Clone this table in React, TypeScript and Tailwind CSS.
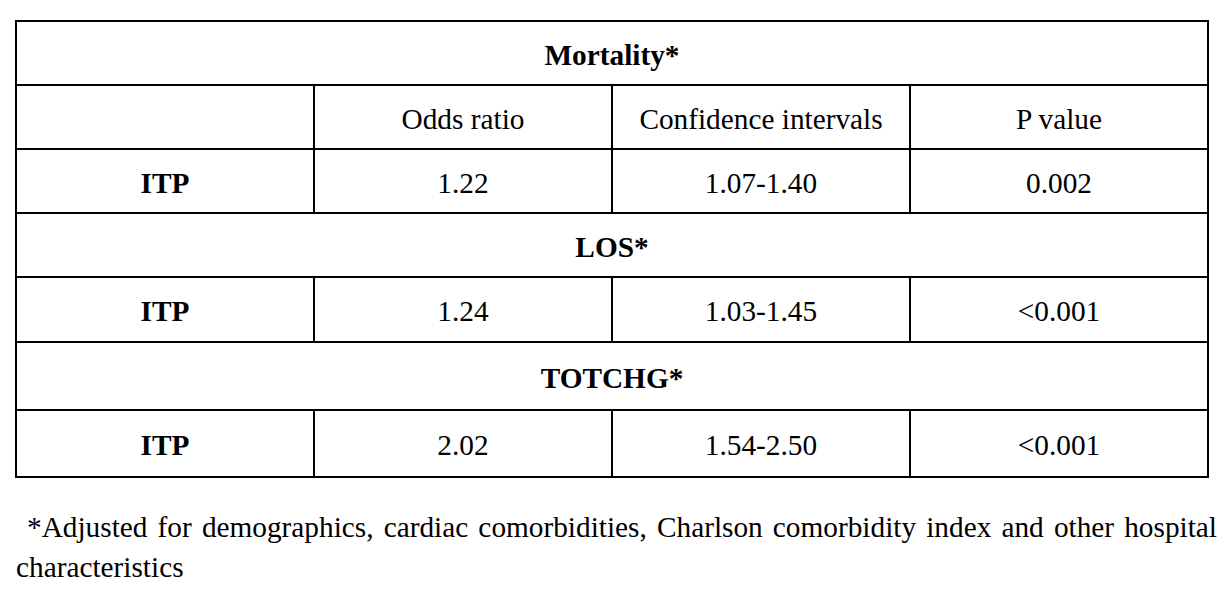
type Row = { label: string; odds: string; ci: string; p: string; h: string };

function Cell({ children, bold, last, h }: { children?: React.ReactNode; bold?: boolean; last?: boolean; h: string }) {
  return (
    <div
      className={`flex items-center justify-center pt-[5px] ${h} ${last ? "" : "border-r-2 border-black"} ${bold ? "font-bold" : ""}`}
    >
      {children}
    </div>
  );
}

function DataRow({ row, border }: { row: Row; border: boolean }) {
  return (
    <div className={`grid grid-cols-[298px_298px_298px_1fr] ${border ? "border-b-2 border-black" : ""}`}>
      <Cell h={row.h} bold>{row.label}</Cell>
      <Cell h={row.h}>{row.odds}</Cell>
      <Cell h={row.h}>{row.ci}</Cell>
      <Cell h={row.h} last>{row.p}</Cell>
    </div>
  );
}

function Section({ title, h }: { title: string; h: string }) {
  return (
    <div className={`flex items-center justify-center pt-[5px] border-b-2 border-black font-bold ${h}`}>{title}</div>
  );
}

export default function App() {
  return (
    <div className="min-h-screen bg-white text-black font-['Liberation_Serif','Times_New_Roman',serif]">
      <div className="pt-[20px] pl-[15px]">
        <div className="w-[1194px] border-2 border-black text-[29.3px]">
          <Section title="Mortality*" h="h-[64px]" />
          <div className="grid grid-cols-[298px_298px_298px_1fr] border-b-2 border-black">
            <Cell h="h-[62px]" />
            <Cell h="h-[62px]">Odds ratio</Cell>
            <Cell h="h-[62px]">Confidence intervals</Cell>
            <Cell h="h-[62px]" last>P value</Cell>
          </div>
          <DataRow row={{ label: "ITP", odds: "1.22", ci: "1.07-1.40", p: "0.002", h: "h-[62px]" }} border />
          <Section title="LOS*" h="h-[64px]" />
          <DataRow row={{ label: "ITP", odds: "1.24", ci: "1.03-1.45", p: "<0.001", h: "h-[63px]" }} border />
          <Section title="TOTCHG*" h="h-[68px]" />
          <DataRow row={{ label: "ITP", odds: "2.02", ci: "1.54-2.50", p: "<0.001", h: "h-[65px]" }} border={false} />
        </div>
      </div>
      <p className="mt-[29px] ml-[16px] w-[1201px] text-[29.3px] leading-[40px] text-justify indent-[11px]">
        *Adjusted for demographics, cardiac comorbidities, Charlson comorbidity index and other hospital characteristics
      </p>
    </div>
  );
}
